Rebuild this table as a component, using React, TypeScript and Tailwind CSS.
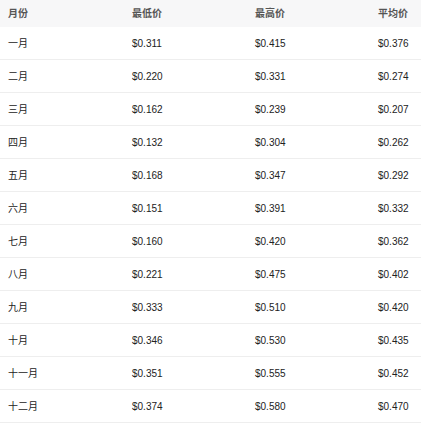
const rows = [
  ["一月", "$0.311", "$0.415", "$0.376"],
  ["二月", "$0.220", "$0.331", "$0.274"],
  ["三月", "$0.162", "$0.239", "$0.207"],
  ["四月", "$0.132", "$0.304", "$0.262"],
  ["五月", "$0.168", "$0.347", "$0.292"],
  ["六月", "$0.151", "$0.391", "$0.332"],
  ["七月", "$0.160", "$0.420", "$0.362"],
  ["八月", "$0.221", "$0.475", "$0.402"],
  ["九月", "$0.333", "$0.510", "$0.420"],
  ["十月", "$0.346", "$0.530", "$0.435"],
  ["十一月", "$0.351", "$0.555", "$0.452"],
  ["十二月", "$0.374", "$0.580", "$0.470"],
];

const cols = "grid grid-cols-[124px_123px_123px_1fr] px-2";

export default function App() {
  return (
    <div
      className="w-[421px] h-[425px] bg-white overflow-hidden"
      style={{ fontFamily: '"Liberation Sans", "Noto Sans CJK SC", sans-serif' }}
    >
      {/* Header */}
      <div className={`${cols} h-[27px] items-center bg-[#f7f7f8] text-[10px] font-semibold text-[#555]`}>
        <span>月份</span>
        <span>最低价</span>
        <span>最高价</span>
        <span>平均价</span>
      </div>

      {/* Rows */}
      {rows.map((r) => (
        <div
          key={r[0]}
          className={`${cols} h-[33px] items-center border-b border-[#eeeeee] text-[10px] text-[#222]`}
        >
          {r.map((c, i) => (
            <span key={i}>{c}</span>
          ))}
        </div>
      ))}
    </div>
  );
}
